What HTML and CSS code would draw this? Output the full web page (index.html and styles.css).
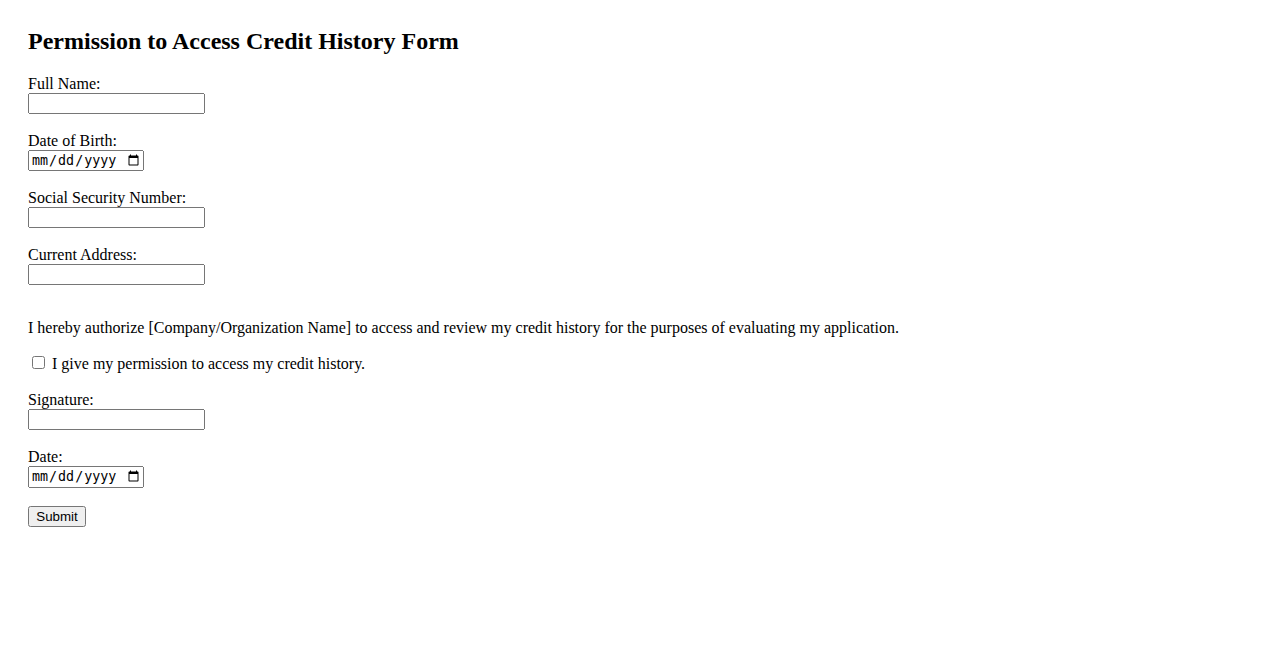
FILE: index.html
```html
<!DOCTYPE html>
<html lang="en">
<head>
  <meta charset="UTF-8">
  <meta name="viewport" content="width=device-width, initial-scale=1.0">
  <title>Permission to Access Credit History Form</title>
  <link rel="stylesheet" href="styles.css">
</head>
<body>
  <div class="container">
    <h2>Permission to Access Credit History Form</h2>
    <form>
      <label for="fullName">Full Name:</label><br>
      <input type="text" id="fullName" name="fullName"><br><br>

      <label for="dob">Date of Birth:</label><br>
      <input type="date" id="dob" name="dob"><br><br>

      <label for="ssn">Social Security Number:</label><br>
      <input type="text" id="ssn" name="ssn"><br><br>

      <label for="address">Current Address:</label><br>
      <input type="text" id="address" name="address"><br><br>

      <p>I hereby authorize [Company/Organization Name] to access and review my credit history for the purposes of evaluating my application.</p>

      <input type="checkbox" id="consent" name="consent">
      <label for="consent">I give my permission to access my credit history.</label><br><br>

      <label for="signature">Signature:</label><br>
      <input type="text" id="signature" name="signature"><br><br>

      <label for="date">Date:</label><br>
      <input type="date" id="date" name="date"><br><br>

      <input type="submit" value="Submit">
    </form>
  </div>
</body>
</html>
```

FILE: styles.css
```css
body {
  font-family: "Liberation Serif", "Times New Roman", serif;
  font-size: 16px;
  margin: 8px;
}

.container {
  padding: 20px;
}

h2 {
  font-size: 24px;
  margin: 0 0 20px;
}

p {
  margin: 16px 0;
}

input[type="text"] {
  box-sizing: border-box;
  width: 177px;
}

input[type="date"] {
  box-sizing: border-box;
  width: 116px;
}

input[type="submit"] {
  box-sizing: border-box;
  width: 58px;
}
```
